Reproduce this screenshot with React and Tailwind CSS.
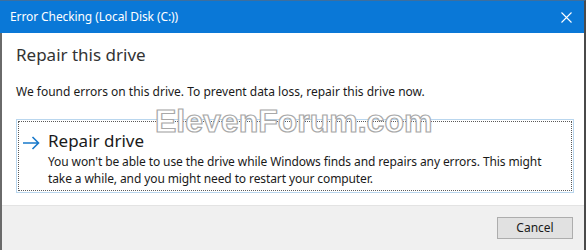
import React from "react";

function CloseIcon() {
  return (
    <svg width="11" height="11" viewBox="0 0 11 11" aria-hidden="true">
      <path d="M0.5 0.5 L10.5 10.5 M10.5 0.5 L0.5 10.5" stroke="#ffffff" strokeWidth="1.1" fill="none" />
    </svg>
  );
}

function ArrowIcon() {
  return (
    <svg width="18" height="14" viewBox="0 0 18 14" aria-hidden="true">
      <path d="M1 7 H16.5 M10.5 1 L16.5 7 L10.5 13" stroke="#1979ca" strokeWidth="1.6" fill="none" />
    </svg>
  );
}

export default function App() {
  return (
    <div
      className="relative w-[586px] h-[250px] flex flex-col overflow-hidden bg-white"
      style={{ fontFamily: '"Noto Sans", "Open Sans", sans-serif' }}
    >
      {/* TITLE BAR */}
      <div className="h-[33px] shrink-0 flex items-center justify-between bg-[#0a78d7] border-t border-[#3d6f9f] border-r-2 border-r-[#4a4a4a] pl-[10px] pr-[12px]">
        <span className="text-[12px] text-white tracking-[-0.1px]">Error Checking (Local Disk (C:))</span>
        <CloseIcon />
      </div>

      {/* BODY */}
      <div className="flex-1 flex flex-col border-l-2 border-[#6a6a6a] border-r-2 border-r-[#4a4a4a]">
        <div className="flex flex-col pl-[14px] pr-[10px] pt-[11px] h-[172px]">
          <h1 className="text-[17px] leading-[22px] text-[#333333]">Repair this drive</h1>
          <p className="mt-[18px] text-[12px] leading-[16px] text-[#1a1a1a]">
            We found errors on this drive. To prevent data loss, repair this drive now.
          </p>

          <div className="mt-[19px] w-[558px] border border-[#b9d6ee] p-px">
            <div className="border border-dotted border-[#5a5a5a] h-[70px] flex pl-[3px] pt-[9px]">
              <div className="pt-[5px] pr-[8px]">
                <ArrowIcon />
              </div>
              <div className="flex flex-col">
                <span className="text-[17px] leading-[20px] text-[#1a1a1a]">Repair drive</span>
                <p className="text-[12px] leading-[17px] text-[#1a1a1a] tracking-[-0.1px] mt-[2px]">
                  You won't be able to use the drive while Windows finds and repairs any errors. This might
                  <br />
                  take a while, and you might need to restart your computer.
                </p>
              </div>
            </div>
          </div>
        </div>

        {/* FOOTER */}
        <div className="flex-1 bg-[#f0f0f0] border-t border-[#e3e3e3] flex justify-end items-start pt-[11px] pr-[11px]">
          <button
            type="button"
            className="w-[76px] h-[22px] bg-[#e1e1e1] border border-[#adadad] text-[12px] text-[#1a1a1a] leading-none"
          >
            Cancel
          </button>
        </div>
      </div>

      {/* WATERMARK */}
      <div
        className="absolute left-[155px] top-[105px] text-[32px] leading-none font-bold text-white"
        style={{ fontFamily: '"Liberation Sans", Arial, sans-serif', WebkitTextStroke: "1.2px #a8a8a8" }}
      >
        ElevenForum.com
      </div>
    </div>
  );
}
